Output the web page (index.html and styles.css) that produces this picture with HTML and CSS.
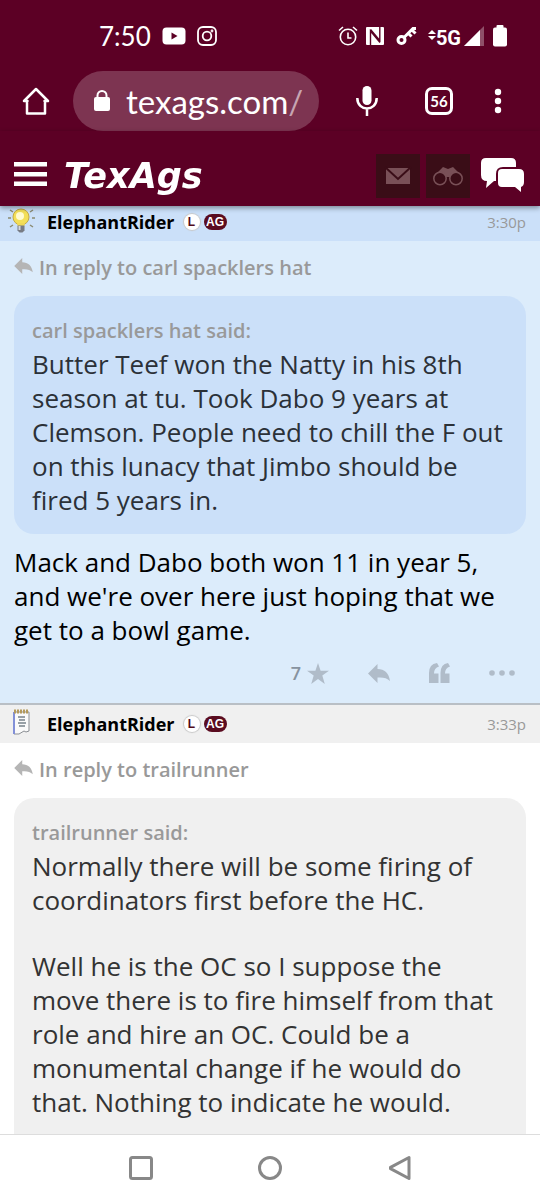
FILE: index.html
```html
<!DOCTYPE html>
<html lang="en">
<head>
<meta charset="utf-8">
<meta name="viewport" content="width=device-width, initial-scale=1">
<title>TexAgs</title>
<link rel="stylesheet" href="styles.css">
</head>
<body>
<svg class="sprite" aria-hidden="true">
  <symbol id="reply" viewBox="0 0 22 19"><path d="M0 9.500 9.500 0v5c7 0 11.500 4 12.500 12-3-3-7-4-12.500-3.500V19z"/></symbol>
</svg>
<div class="screen">
  <div class="status">
    <div class="status-side">
      <span class="clock">7:50</span>
      <svg width="24" height="18" viewBox="0 0 24 18"><rect x=".5" y=".5" width="23" height="17" rx="4" fill="#fff"/><path d="M9.500 5.500v7l6-3.500z" fill="#5c0025"/></svg>
      <svg width="20" height="20" viewBox="0 0 20 20" fill="none" stroke="#fff" stroke-width="1.800"><rect x="1" y="1" width="18" height="18" rx="5"/><circle cx="10" cy="10" r="4.300"/><circle cx="15" cy="5" r=".5"/></svg>
    </div>
    <div class="status-side status-right">
      <svg width="20" height="20" viewBox="0 0 20 20" fill="none" stroke="#fff" stroke-width="1.600"><circle cx="10" cy="11" r="7.700"/><path d="M10 6.500V12h3.500M1 4.500 5 1M19 4.500 15 1"/></svg>
      <svg width="20" height="20" viewBox="0 0 20 20"><rect x="1" y="1" width="18" height="18" rx="1" fill="#fff"/><path d="M5.500 19V5l9.500 11.500M14.800 1v13.500L5.500 3.500" fill="none" stroke="#5c0025" stroke-width="1.400"/></svg>
      <svg class="key" width="21" height="20" viewBox="0 0 21 20" fill="none" stroke="#fff" stroke-width="3"><circle cx="5.500" cy="14" r="3.500"/><path d="m8 11.500 9-9h3M12.500 7.500l3 3M16 4l3.500 3.500"/></svg>
      <span class="network"><svg width="8" height="12" viewBox="0 0 8 12" fill="#fff"><path d="M0 5 4 1l4 4zM0 7h8l-4 4z"/></svg>5G</span>
      <svg width="20" height="20" viewBox="0 0 20 20"><path d="M0 20 20 0v20z" fill="#8f5069"/><path d="M0 20 16 4v16z" fill="#fff"/></svg>
      <svg class="battery" width="14" height="22" viewBox="0 0 14 22" fill="#fff"><rect y="2.500" width="14" height="19" rx="2"/><rect x="3.500" y="0" width="7" height="4" rx="1"/></svg>
    </div>
  </div>
  <div class="browser">
    <button class="plain" aria-label="Home"><svg width="28" height="28" viewBox="0 0 28 28" fill="none" stroke="#fff" stroke-width="2.500" stroke-linejoin="round" stroke-linecap="round"><path d="M5 14v12.500h18V14M2 14 14 2l12 12H22.500M2 14h3.500"/></svg></button>
    <a class="address" href="#"><svg width="18" height="22" viewBox="0 0 18 22"><rect x="1" y="7" width="16" height="14" rx="2" fill="#fff"/><path d="M4.500 8V5.500a4.500 4.500 0 0 1 9 0V8" fill="none" stroke="#fff" stroke-width="2"/></svg><span>texags.com<span class="slash">/</span></span></a>
    <button class="plain" aria-label="Voice search"><svg width="22" height="32" viewBox="0 0 22 32"><rect x="6.500" y="1" width="9" height="19" rx="4.500" fill="#fff"/><path d="M1.300 13c0 14 19.400 14 19.400 0M11 23.500V31" fill="none" stroke="#fff" stroke-width="2.500"/></svg></button>
    <button class="tabs" aria-label="56 open tabs">56</button>
    <button class="plain" aria-label="Menu"><svg width="8" height="26" viewBox="0 0 8 26" fill="#fff"><circle cx="4" cy="4" r="3.200"/><circle cx="4" cy="13" r="3.200"/><circle cx="4" cy="22" r="3.200"/></svg></button>
  </div>
  <header class="site">
    <button class="plain menu" aria-label="Site menu"><svg width="33" height="26" viewBox="0 0 33 26" fill="#fff"><path d="M0 1h33v4.500H0zM0 11h33v4.500H0zM0 20.500h33V25H0z"/></svg></button>
    <a class="logo" href="#">TexAgs</a>
    <div class="site-tools">
      <button class="tile" aria-label="Messages"><svg width="24" height="16" viewBox="0 0 24 16"><path d="M0 0h24v16H0z" fill="#795057"/><path d="m-1-1 13 12L25-1" fill="none" stroke="#3a0d17" stroke-width="2"/></svg></button>
      <button class="tile" aria-label="Watched"><svg width="30" height="20" viewBox="0 0 30 20"><path d="M4 7 10 1l5 2 5-2 6 6-8 4h-6z" fill="#795057"/><g fill="#3a0d17" stroke="#795057" stroke-width="1.500"><circle cx="7" cy="12.500" r="6.200"/><circle cx="23" cy="12.500" r="6.200"/></g></svg></button>
      <button class="plain" aria-label="Forums"><svg width="43" height="35" viewBox="0 0 43 35" fill="#fff"><path d="M5 0h25q5 0 5 5v4H22q-7 0-7 7v7h-2l-8 7 1-7q-6 0-6-6V5q0-5 5-5z"/><path d="M21 11h17q5 0 5 5v8q0 4-3 5v5l-6-5H21q-4 0-4-4V15q0-4 4-4z"/></svg></button>
    </div>
  </header>
  <main class="thread">
    <article class="post starred">
      <header class="post-head">
        <svg class="topic" width="28" height="28" viewBox="0 0 28 28"><path d="M0 11h3M24 11h3M2 20l3-2M25 20l-3-2M2 3l3 2M25 3l-3 2" stroke="#8a8a72" stroke-width="1.500"/><circle cx="13" cy="10" r="8" fill="#f3df58" stroke="#c2aa48"/><path d="M9 16h8l-1 4h-6z" fill="#efd957"/><circle cx="12" cy="9" r="4" fill="#fffbd0"/><path d="M9.500 18.500h7v5l-2 2h-3l-2-2z" fill="#777b84"/><path d="M11.500 19v4" stroke="#d5d8dd" stroke-width="2"/></svg>
        <a class="author" href="#">ElephantRider</a><span class="badge-l">L</span><span class="badge-ag">AG</span><time>3:30p</time>
      </header>
      <a class="reply-to" href="#"><svg width="19" height="16"><use href="#reply"/></svg>In reply to carl spacklers hat</a>
      <blockquote class="quote"><cite>carl spacklers hat said:</cite><p>Butter Teef won the Natty in his 8th season at tu. Took Dabo 9 years at Clemson. People need to chill the F out on this lunacy that Jimbo should be fired 5 years in.</p></blockquote>
      <p class="message">Mack and Dabo both won 11 in year 5, and we're over here just hoping that we get to a bowl game.</p>
      <div class="actions">
        <button class="star">7<svg width="22" height="21" viewBox="0 0 22 21"><path d="m11 0 2.600 7.700H22l-6.700 4.900L17.800 21 11 16l-6.800 5 2.500-8.400L0 7.700h8.400z"/></svg></button>
        <button class="plain" aria-label="Reply"><svg width="22" height="19"><use href="#reply"/></svg></button>
        <button class="plain" aria-label="Quote"><svg width="21" height="20" viewBox="0 0 21 20"><path d="M0 20V10Q0 1 8 0l2 3.500Q5 5 5 10.500h4.500V20z"/><path d="M11.500 20V10q0-9 7.500-10l2 3.500q-5 1.500-5 7h4.500V20z"/></svg></button>
        <button class="plain" aria-label="More"><svg width="26" height="6" viewBox="0 0 26 6"><circle cx="3" cy="3" r="2.800"/><circle cx="13" cy="3" r="2.800"/><circle cx="23" cy="3" r="2.800"/></svg></button>
      </div>
    </article>
    <article class="post">
      <header class="post-head">
        <svg class="topic" width="28" height="28" viewBox="0 0 28 28"><path d="M6 3h15v19l-3 1-2-1-5 3H6z" fill="#fafafa" stroke="#8b8f94"/><path d="M6 3v22" stroke="#8290d8" stroke-width="2"/><path d="M6 2.500h15" stroke="#b49a5c" stroke-width="4" stroke-dasharray="2 1"/><path d="M10 8h7M11 11h6M10 14h8M11 17h6" stroke="#77838b" stroke-width="1.500"/></svg>
        <a class="author" href="#">ElephantRider</a><span class="badge-l">L</span><span class="badge-ag">AG</span><time>3:33p</time>
      </header>
      <a class="reply-to" href="#"><svg width="19" height="16"><use href="#reply"/></svg>In reply to trailrunner</a>
      <blockquote class="quote"><cite>trailrunner said:</cite><p>Normally there will be some firing of coordinators first before the HC.</p><p>Well he is the OC so I suppose the move there is to fire himself from that role and hire an OC. Could be a monumental change if he would do that. Nothing to indicate he would.</p><p>&nbsp;</p></blockquote>
    </article>
  </main>
  <nav class="system" aria-label="System">
    <button class="plain" aria-label="Recent apps"><svg width="26" height="26" viewBox="0 0 26 26"><rect x="2.500" y="2.500" width="21" height="21" rx="2"/></svg></button>
    <button class="plain" aria-label="Home screen"><svg width="26" height="26" viewBox="0 0 26 26"><circle cx="13" cy="13" r="10.500"/></svg></button>
    <button class="plain" aria-label="Back"><svg width="26" height="26" viewBox="0 0 26 26"><path d="M23 2.500v21L4.500 13.700v-1.400z"/></svg></button>
  </nav>
</div>
</body>
</html>
```
FILE: styles.css
```css
* { box-sizing: border-box; }
body { margin: 0; font-family: "Open Sans", sans-serif; color: #000; }
p, blockquote { margin: 0; }
a { color: inherit; text-decoration: none; }
button { padding: 0; border: 0; background: none; font: inherit; color: inherit; }
svg { display: block; flex: none; overflow: visible; }
.sprite { position: absolute; width: 0; height: 0; }
.screen { display: flex; flex-direction: column; height: 100vh; background: #fff; }
.status, .browser, .site { background: #5c0025; color: #fff; flex: none; display: flex; align-items: center; }
.status { height: 71px; justify-content: space-between; padding: 0 33px 0 99px; font-family: Lato, sans-serif; }
.status-side { display: flex; align-items: center; gap: 11px; }
.status-right { gap: 7px; }
.clock { font-size: 26px; }
.key { margin: 0 4px; }
.network { display: flex; align-items: center; margin-right: -4px; padding-top: 4px; font: bold 20px Roboto, sans-serif; }
.network svg { margin-bottom: 6px; }
.battery { margin-left: 2px; }
.browser { height: 60px; padding: 0 38px 0 22px; font-family: Lato, sans-serif; justify-content: space-between; }
.address { display: flex; align-items: center; gap: 15px; width: 246px; height: 60px; margin-right: 14px; padding-left: 20px; border-radius: 30px; background: #7d3451; font-size: 33px; }
.slash { color: #c7a4b2; }
.tabs { width: 28px; height: 28px; margin: 0 18px 0 24px; border: 3px solid #fff; border-radius: 7px; font-size: 15px; font-weight: bold; line-height: 22px; }
.site { position: relative; z-index: 1; height: 75px; padding: 14px 16px 0 14px; box-shadow: 0 2px 5px #0006; }
.menu { padding-bottom: 4px; }
.logo { margin-left: 17px; font: italic bold 35px "DejaVu Sans", sans-serif; }
.site-tools { display: flex; align-items: center; gap: 6px; margin-left: auto; }
.tile { display: grid; place-items: center; width: 44px; height: 44px; background: #3a0d17; }
.site-tools .plain { margin-left: 5px; }
.thread { flex: 1; min-height: 0; overflow-y: auto; scrollbar-width: none; }
.post { background: #fff; }
.starred { margin-top: -5px; background: #dcecfb; }
.post-head { display: flex; align-items: center; height: 40px; padding: 0 14px 0 8px; border-top: 2px solid #b9bfc5; background: #f0f0f0; }
.topic { margin-bottom: 2px; }
.starred .post-head { background: #cbe0f9; }
.author { margin: 0 9px 0 11px; font-size: 18px; font-weight: bold; }
.badge-l, .badge-ag { height: 16px; border-radius: 8px; font: bold 12px/16px "Liberation Sans", sans-serif; text-align: center; }
.badge-l { width: 16px; margin-right: 4px; background: #fff; color: #500b1c; box-shadow: 0 0 1px 1px #c8c8c8; }
.badge-ag { width: 23px; background: #5a0c20; color: #fff; }
time { margin-left: auto; font-size: 15px; color: #999; }
.reply-to { display: flex; align-items: center; gap: 6px; height: 55px; padding: 0 14px 2px; font-size: 20px; font-weight: 600; color: #999; }
.reply-to svg { fill: #b5b5b5; margin-bottom: 4px; }
.quote { margin: 0 14px; padding: 19px 18px 17px; border-radius: 20px; background: #f0f0f0; color: #333; }
.starred .quote { background: #cbe0f9; color: #2b3138; }
.quote cite { display: block; font-size: 20px; line-height: 32px; font-style: normal; font-weight: 600; color: #999; }
.quote p, .message { font-size: 26px; line-height: 34px; }
.quote p + p { margin-top: 32px; }
.message { margin: 11px 14px 0; }
.actions { display: flex; align-items: center; justify-content: flex-end; gap: 39px; height: 56px; padding: 0 25px 4px 14px; fill: #b0bcc9; }
.star { display: flex; align-items: center; gap: 6px; font-size: 18px; font-weight: 600; color: #8793a0; }
.system { flex: none; display: flex; align-items: center; justify-content: center; gap: 103px; height: 66px; border-top: 1px solid #ddd; background: #fff; fill: none; stroke: #888; stroke-width: 3; stroke-linejoin: round; }
```
